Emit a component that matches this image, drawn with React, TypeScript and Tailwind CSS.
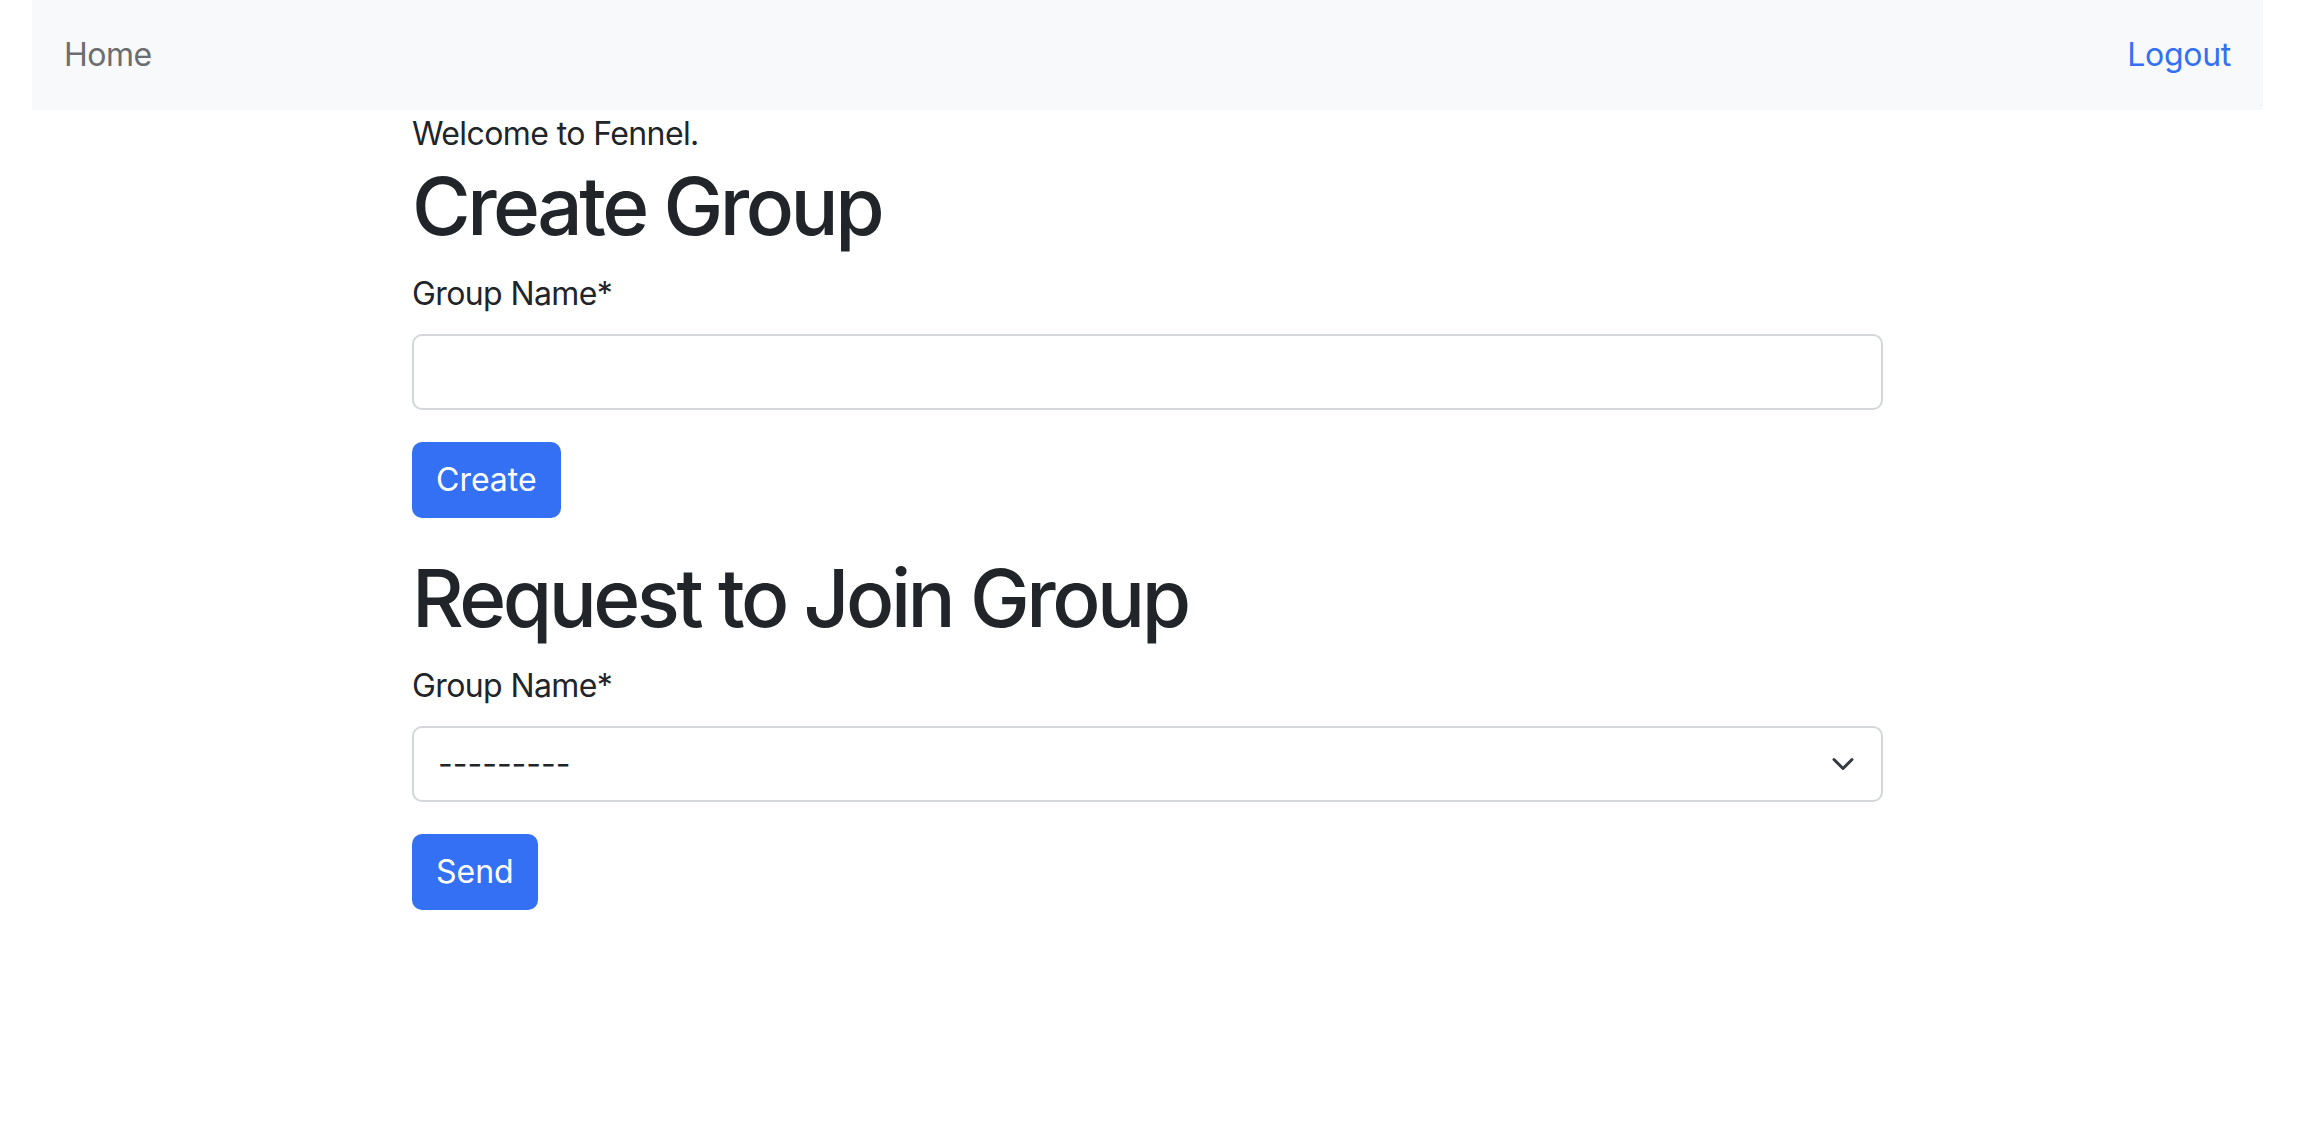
export default function App() {
  return (
    <div className="min-h-screen bg-white text-[#212529] font-['Inter','Liberation_Sans',sans-serif]">
      <div className="pl-[32px] pr-[37px]">
        {/* Navbar */}
        <nav className="h-[110px] bg-[#f8f9fa] flex items-center justify-between px-[32px] text-[32px]">
          <a href="#" className="text-[#6b6d6f] tracking-[-0.5px]">
            Home
          </a>
          <a href="#" className="text-[#3470f4] tracking-[-0.3px]">
            Logout
          </a>
        </nav>

        <main className="w-[1471px] mx-auto">
          <p className="text-[32px] leading-[48px] tracking-[-0.6px]">Welcome to Fennel.</p>

          {/* Create group */}
          <h1 className="text-[80px] leading-[96px] font-medium tracking-[-3.5px] mb-[16px]">Create Group</h1>
          <form>
            <label className="block text-[32px] leading-[48px] tracking-[-0.6px] mb-[16px]">Group Name*</label>
            <input
              type="text"
              className="block w-full h-[76px] border-2 border-[#d3d7db] rounded-[10px] px-[24px] text-[32px] mb-[32px] outline-none"
            />
            <button
              type="button"
              className="h-[76px] px-[24px] bg-[#3470f4] text-white text-[32px] rounded-[10px] mb-[32px]"
            >
              Create
            </button>
          </form>

          {/* Join group */}
          <h1 className="text-[80px] leading-[96px] font-medium tracking-[-3.5px] mb-[16px]">Request to Join Group</h1>
          <form>
            <label className="block text-[32px] leading-[48px] tracking-[-0.6px] mb-[16px]">Group Name*</label>
            <div className="relative mb-[32px]">
              <select className="block w-full h-[76px] appearance-none border-2 border-[#d3d7db] rounded-[10px] pl-[24px] pr-[80px] text-[32px] bg-white outline-none">
                <option>---------</option>
              </select>
              <svg
                className="absolute right-[28px] top-[26px] pointer-events-none"
                width="24"
                height="24"
                viewBox="0 0 16 16"
                fill="none"
              >
                <path d="M2 5l6 6 6-6" stroke="#343a40" strokeWidth="2" strokeLinecap="round" strokeLinejoin="round" />
              </svg>
            </div>
            <button
              type="button"
              className="h-[76px] px-[24px] bg-[#3470f4] text-white text-[32px] rounded-[10px]"
            >
              Send
            </button>
          </form>
        </main>
      </div>
    </div>
  );
}
